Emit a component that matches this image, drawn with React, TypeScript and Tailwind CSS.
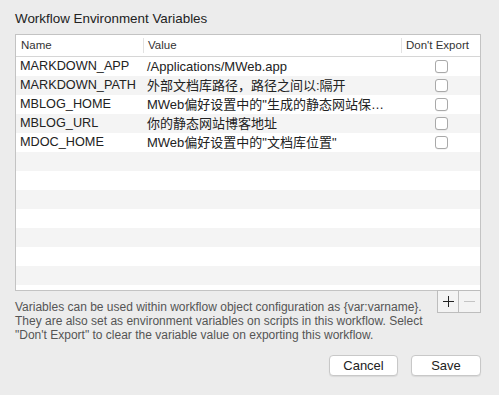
const rows = [
  { name: "MARKDOWN_APP", value: "/Applications/MWeb.app" },
  { name: "MARKDOWN_PATH", value: "外部文档库路径，路径之间以:隔开" },
  { name: "MBLOG_HOME", value: "MWeb偏好设置中的\"生成的静态网站保…" },
  { name: "MBLOG_URL", value: "你的静态网站博客地址" },
  { name: "MDOC_HOME", value: "MWeb偏好设置中的\"文档库位置\"" },
];

const font = "font-['Liberation_Sans','Noto_Sans_CJK_SC',sans-serif]";

function Checkbox() {
  return <div className="w-[13px] h-[13px] rounded-[3px] border border-[#a9a9a9] bg-white shadow-[0_0.5px_0.5px_rgba(0,0,0,0.08)]" />;
}

export default function App() {
  const filler = Array.from({ length: 8 });
  return (
    <div className={`w-[499px] h-[395px] bg-[#ececec] text-[#222] ${font} pl-[15px] pr-[18px] pt-[11px]`}>
      <div className="text-[13.4px] leading-4 mb-[7px]">Workflow Environment Variables</div>

      {/* table */}
      <div className="h-[257px] border border-[#c3c3c3] bg-white overflow-hidden">
        <div className="flex h-[22px] border-b border-[#d6d6d6] text-[11.5px] text-[#333]">
          <div className="w-[128px] pl-[5px] border-r border-[#e2e2e2] my-[3px] leading-[15px]">Name</div>
          <div className="w-[258px] pl-[4px] border-r border-[#e2e2e2] my-[3px] leading-[15px]">Value</div>
          <div className="flex-1 pl-[4px] my-[3px] leading-[15px]">Don't Export</div>
        </div>
        {rows.map((r, i) => (
          <div key={r.name} className={`flex h-[19px] items-center text-[12.7px] leading-[19px] ${i % 2 ? "bg-[#f4f4f4]" : "bg-white"}`}>
            <div className="w-[128px] pl-[4px] whitespace-nowrap">{r.name}</div>
            <div className="w-[259px] pl-[3px] whitespace-nowrap overflow-hidden text-[13px]">{r.value}</div>
            <div className="flex-1 flex justify-center pr-[1px]">
              <Checkbox />
            </div>
          </div>
        ))}
        {filler.map((_, i) => (
          <div key={i} className={`h-[19px] ${(i + 5) % 2 ? "bg-[#f4f4f4]" : "bg-white"}`} />
        ))}
      </div>

      {/* footer */}
      <div className="flex items-start">
        <p className="flex-1 pt-[9px] text-[12px] leading-[14px] text-[#555] whitespace-nowrap">
          Variables can be used within workflow object configuration as {"{var:varname}"}.
          <br />
          They are also set as environment variables on scripts in this workflow. Select
          <br />
          "Don't Export" to clear the variable value on exporting this workflow.
        </p>
        <div className="flex -mt-px h-[23px] border border-[#bdbdbd] bg-[#f3f3f3]">
          <div className="w-[21px] border-r border-[#bdbdbd] flex items-center justify-center">
            <svg width="11" height="11" viewBox="0 0 11 11"><path d="M5.5 0v11M0 5.5h11" stroke="#222" strokeWidth="1" /></svg>
          </div>
          <div className="w-[21px] flex items-center justify-center">
            <svg width="11" height="11" viewBox="0 0 11 11"><path d="M0 5.5h11" stroke="#c4c4c4" strokeWidth="1" /></svg>
          </div>
        </div>
      </div>

      <div className="flex justify-end gap-[13px] mt-[13px]">
        <button className="w-[69px] h-[21px] rounded-[4px] bg-white border border-[#c8c8c8] shadow-[0_1px_1px_rgba(0,0,0,0.08)] text-[13px] leading-[19px] text-[#222]">Cancel</button>
        <button className="w-[70px] h-[21px] rounded-[4px] bg-white border border-[#c8c8c8] shadow-[0_1px_1px_rgba(0,0,0,0.08)] text-[13px] leading-[19px] text-[#222]">Save</button>
      </div>
    </div>
  );
}
